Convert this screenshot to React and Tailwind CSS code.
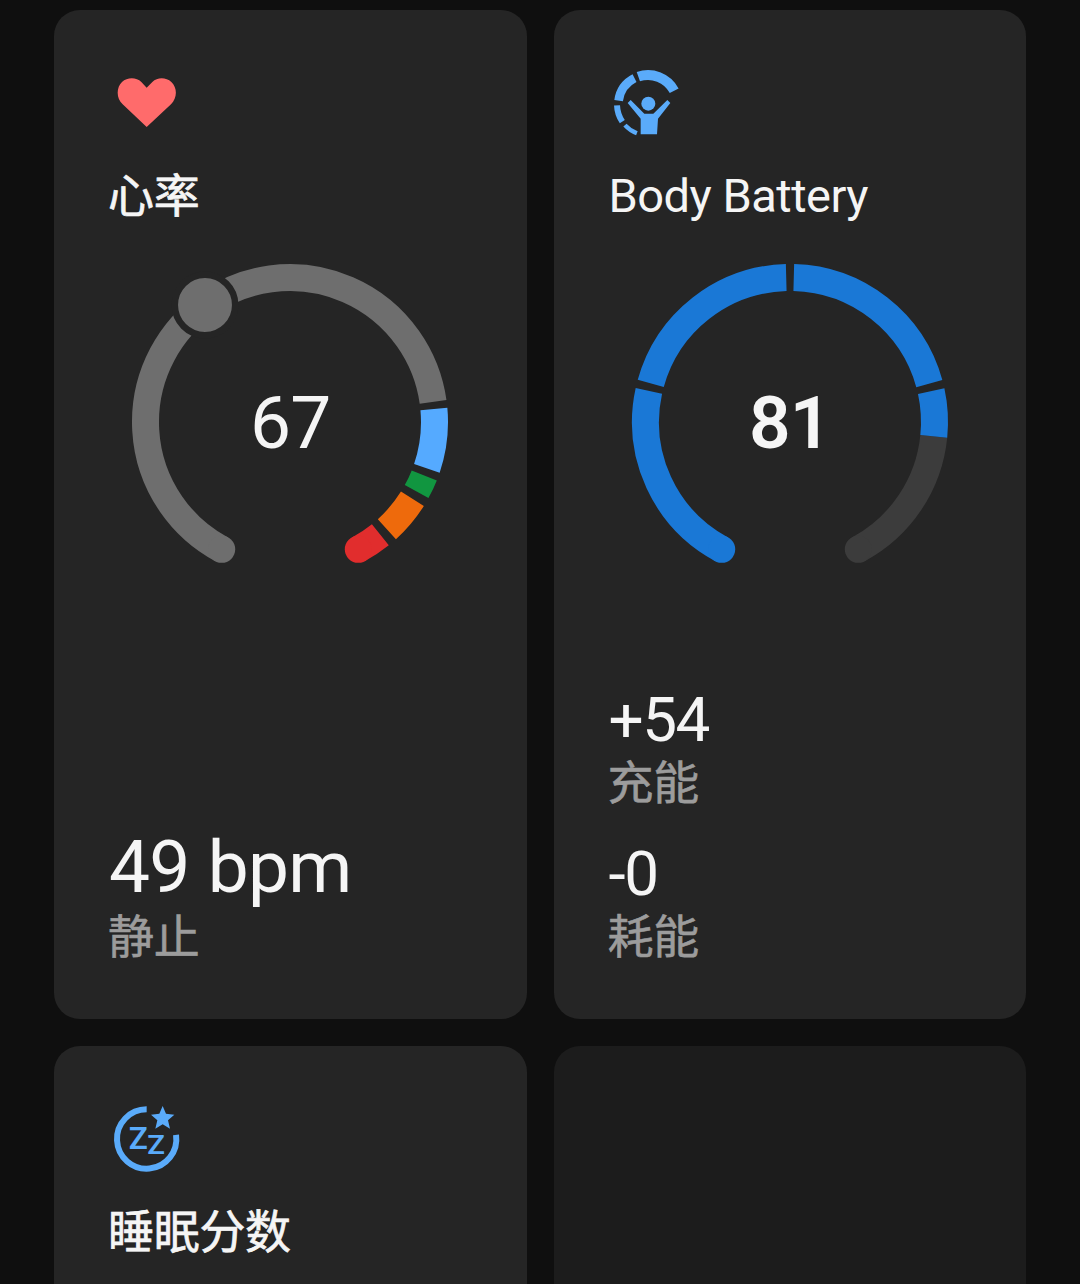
import clsx from 'clsx'

const SANS = "font-['Roboto','Noto_Sans_CJK_SC',sans-serif]"

// angles are in degrees, clockwise from 12 o'clock
const HEART_ZONES = [
  { from: 208.2, to: 442, color: '#6e6e6e', cap: 'start' },
  { from: 84.8, to: 108.7, color: '#55aaff' },
  { from: 111.7, to: 118.8, color: '#119640' },
  { from: 122.1, to: 137.9, color: '#ee6a0c' },
  { from: 141.3, to: 151.8, color: '#e12d2d', cap: 'end' },
]

const BATTERY_ZONES = [
  { from: 95.7, to: 151.8, color: '#3c3c3c', cap: 'end' },
  { from: 208.2, to: 282.4, color: '#1a78d6', cap: 'start' },
  { from: 285.5, to: 358.5, color: '#1a78d6' },
  { from: 1.5, to: 74.6, color: '#1a78d6' },
  { from: 77.7, to: 95.7, color: '#1a78d6' },
]

function point(cx, cy, r, deg) {
  const a = (deg * Math.PI) / 180
  return [cx + r * Math.sin(a), cy - r * Math.cos(a)]
}

function arc(cx, cy, r, from, to) {
  const [x1, y1] = point(cx, cy, r, from)
  const [x2, y2] = point(cx, cy, r, to)
  return `M${x1} ${y1}A${r} ${r} 0 ${to - from > 180 ? 1 : 0} 1 ${x2} ${y2}`
}

function Gauge({ zones, marker, children }) {
  return (
    <div className="relative mt-[38px] w-[320px] self-center">
      <svg width="320" height="320" viewBox="0 0 320 320" fill="none">
        {zones.map(({ from, to, color, cap }) => {
          const [cx, cy] = point(160, 160, 144.5, cap === 'start' ? from : to)
          return (
            <g key={from}>
              <path d={arc(160, 160, 144.5, from, to)} stroke={color} strokeWidth="27" />
              {cap && <circle cx={cx} cy={cy} r="13.5" fill={color} />}
            </g>
          )
        })}
        {marker && <circle cx="75" cy="43" r="30.2" fill="#6e6e6e" stroke="#252525" strokeWidth="6.5" />}
      </svg>
      <div className="absolute inset-0 flex items-center justify-center pt-0.5 text-[#f5f5f5]">{children}</div>
    </div>
  )
}

function HeartIcon() {
  return (
    <svg className="size-[74px]" viewBox="27 18 222 222" fill="#ff6b6b">
      <path d="M140 201L68 133C48 114 49 82 66 66C82 51 109 51 124 66L140 83L157 66C172 51 198 51 214 66C232 83 233 113 213 133Z" />
    </svg>
  )
}

function BodyBatteryIcon() {
  return (
    <svg className="size-[74px]" viewBox="27 18 222 222" fill="none" stroke="#5aabfa">
      <path d={arc(144, 134, 89, -19, 62)} strokeWidth="30" />
      <path d={arc(144, 134, 89, -82, -27)} strokeWidth="26" />
      <path d={arc(144, 133, 93, -124, -92)} strokeWidth="18" />
      <path d={arc(144, 133, 93, -159, -132)} strokeWidth="13" />
      <circle cx="145" cy="131" r="21" fill="#5aabfa" stroke="none" />
      <path d="M83 129L92 120L133 161H160L202 120L211 129L174 176L171 223H122V176Z" fill="#5aabfa" stroke="none" />
    </svg>
  )
}

function SleepIcon() {
  return (
    <svg className="size-[74px]" viewBox="27 21 222 222" fill="#5aabfa">
      <path d={arc(140, 132, 89, 82, 360)} fill="none" stroke="#5aabfa" strokeWidth="18" />
      <path d="M188 33L198 56L223 59L204 76L210 101L188 88L166 101L172 76L153 59L178 56Z" />
      <text x="86" y="162" textLength="57" lengthAdjust="spacingAndGlyphs" className="font-['Roboto',sans-serif] text-[93px] font-semibold">Z</text>
      <text x="142" y="177" textLength="53" lengthAdjust="spacingAndGlyphs" className="font-['Roboto',sans-serif] text-[80px] font-semibold">Z</text>
    </svg>
  )
}

function Card({ icon, title, cjk, children }) {
  return (
    <section className="flex h-[1009px] flex-col rounded-[26px] bg-[#252525] px-[55px] pt-14 pb-[55px]">
      {icon}
      <h2
        className={clsx(
          'mt-7 whitespace-nowrap leading-[56px] font-normal text-[#f5f5f5]',
          cjk ? '-ml-px text-[46px] tracking-[-0.3px] [-webkit-text-stroke:0.7px_#f5f5f5]' : 'text-[47px] tracking-[-0.5px]',
        )}
      >
        {title}
      </h2>
      {children}
    </section>
  )
}

function Stat({ value, label, large }) {
  return (
    <div>
      <p className={clsx('whitespace-nowrap text-[#f5f5f5]', large ? 'mb-0.5 text-[73px] leading-[82px] tracking-[-0.8px] [word-spacing:1px]' : 'mb-1 text-[62px] leading-[64px] tracking-[-1.5px]')}>
        {value}
      </p>
      <p className="-ml-px text-[46px] leading-[54px] tracking-[-0.3px] text-[#9c9c9c] [-webkit-text-stroke:0.6px_#9c9c9c]">{label}</p>
    </div>
  )
}

export default function App() {
  return (
    <main className={`${SANS} h-[1284px] w-[1080px] overflow-hidden bg-[#0f0f0f] px-[54px] pt-2.5`}>
      <div className="grid grid-cols-2 gap-[27px]">
        <Card icon={<HeartIcon />} title="心率" cjk>
          <Gauge zones={HEART_ZONES} marker>
            <span className="text-[73px] leading-none tracking-[-0.8px]">67</span>
          </Gauge>
          <div className="mt-auto">
            <Stat value="49 bpm" label="静止" large />
          </div>
        </Card>

        <Card icon={<BodyBatteryIcon />} title="Body Battery">
          <Gauge zones={BATTERY_ZONES}>
            <span className="text-[73px] font-semibold leading-none tracking-[-1px]">81</span>
          </Gauge>
          <div className="mt-auto flex flex-col gap-8">
            <Stat value="+54" label="充能" />
            <Stat value="-0" label="耗能" />
          </div>
        </Card>

        <Card icon={<SleepIcon />} title="睡眠分数" cjk />

        {/* empty slot */}
        <div className="rounded-[26px] bg-[#1c1c1c]" />
      </div>
    </main>
  )
}
